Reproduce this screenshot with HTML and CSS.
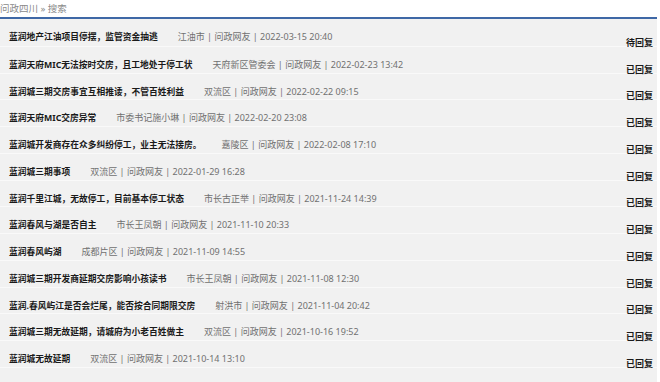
FILE: index.html
```html
<!DOCTYPE html>
<html lang="zh-CN">
<head>
    <meta charset="UTF-8">
    <meta name="viewport" content="width=device-width, initial-scale=1.0">
    <title>问政四川 - 搜索</title>
    <link rel="stylesheet" href="styles.css">
</head>
<body>

    <!-- 面包屑 -->
    <div class="crumb">问政四川 &raquo; 搜索</div>

    <!-- 搜索结果 -->
    <ul class="result-list">
        <li class="item">
            <span class="title">蓝润地产江油项目停摆，监管资金抽逃</span>
            <span class="meta">江油市 | 问政网友 | 2022-03-15 20:40</span>
            <span class="status">待回复</span>
        </li>
        <li class="item">
            <span class="title">蓝润天府MIC无法按时交房，且工地处于停工状</span>
            <span class="meta">天府新区管委会 | 问政网友 | 2022-02-23 13:42</span>
            <span class="status">已回复</span>
        </li>
        <li class="item">
            <span class="title">蓝润城三期交房事宜互相推诿，不管百姓利益</span>
            <span class="meta">双流区 | 问政网友 | 2022-02-22 09:15</span>
            <span class="status">已回复</span>
        </li>
        <li class="item">
            <span class="title">蓝润天府MIC交房异常</span>
            <span class="meta">市委书记施小琳 | 问政网友 | 2022-02-20 23:08</span>
            <span class="status">已回复</span>
        </li>
        <li class="item">
            <span class="title">蓝润城开发商存在众多纠纷停工，业主无法接房。</span>
            <span class="meta">嘉陵区 | 问政网友 | 2022-02-08 17:10</span>
            <span class="status">已回复</span>
        </li>
        <li class="item">
            <span class="title">蓝润城三期事项</span>
            <span class="meta">双流区 | 问政网友 | 2022-01-29 16:28</span>
            <span class="status">已回复</span>
        </li>
        <li class="item">
            <span class="title">蓝润千里江城，无故停工，目前基本停工状态</span>
            <span class="meta">市长古正举 | 问政网友 | 2021-11-24 14:39</span>
            <span class="status">已回复</span>
        </li>
        <li class="item">
            <span class="title">蓝润春风与湖是否自主</span>
            <span class="meta">市长王凤朝 | 问政网友 | 2021-11-10 20:33</span>
            <span class="status">已回复</span>
        </li>
        <li class="item">
            <span class="title">蓝润春风屿湖</span>
            <span class="meta">成都片区 | 问政网友 | 2021-11-09 14:55</span>
            <span class="status">已回复</span>
        </li>
        <li class="item">
            <span class="title">蓝润城三期开发商延期交房影响小孩读书</span>
            <span class="meta">市长王凤朝 | 问政网友 | 2021-11-08 12:30</span>
            <span class="status">已回复</span>
        </li>
        <li class="item">
            <span class="title">蓝润.春风屿江是否会烂尾，能否按合同期限交房</span>
            <span class="meta">射洪市 | 问政网友 | 2021-11-04 20:42</span>
            <span class="status">已回复</span>
        </li>
        <li class="item">
            <span class="title">蓝润城三期无故延期，请城府为小老百姓做主</span>
            <span class="meta">双流区 | 问政网友 | 2021-10-16 19:52</span>
            <span class="status">已回复</span>
        </li>
        <li class="item">
            <span class="title">蓝润城无故延期</span>
            <span class="meta">双流区 | 问政网友 | 2021-10-14 13:10</span>
            <span class="status">已回复</span>
        </li>
        <li class="item"></li>
    </ul>

</body>
</html>
```

FILE: styles.css
```css
body {
    font-family: "Noto Sans", "Noto Sans CJK SC", sans-serif;
    background-color: #fff;
    color: #222;
    margin: 0;
    padding: 0;
}

/* 面包屑 */
.crumb {
    width: 657px;
    height: 17px;
    line-height: 18px;
    font-size: 9.5px;
    color: #8a8a8a;
    border-bottom: 2px solid #3f68a6;
}

/* 结果列表 */
.result-list {
    list-style: none;
    margin: 0;
    padding: 0;
    width: 657px;
    background: #f1f1f1;
}

.item {
    display: flex;
    align-items: flex-start;
    height: 26.75px;
    box-sizing: border-box;
    padding: 13px 4px 0 9px;
    border-top: 1px solid #f9f9f9;
}

.item:first-child {
    border-top: none;
}

.title {
    font-size: 8.75px;
    line-height: 10px;
    font-weight: bold;
    color: #1a1a1a;
}

.meta {
    margin-left: 20px;
    font-size: 9px;
    line-height: 10px;
    color: #707070;
}

.status {
    margin-left: auto;
    align-self: flex-end;
    font-size: 9px;
    line-height: 10px;
    font-weight: bold;
    color: #1a1a1a;
    margin-bottom: -2px;
}
```
